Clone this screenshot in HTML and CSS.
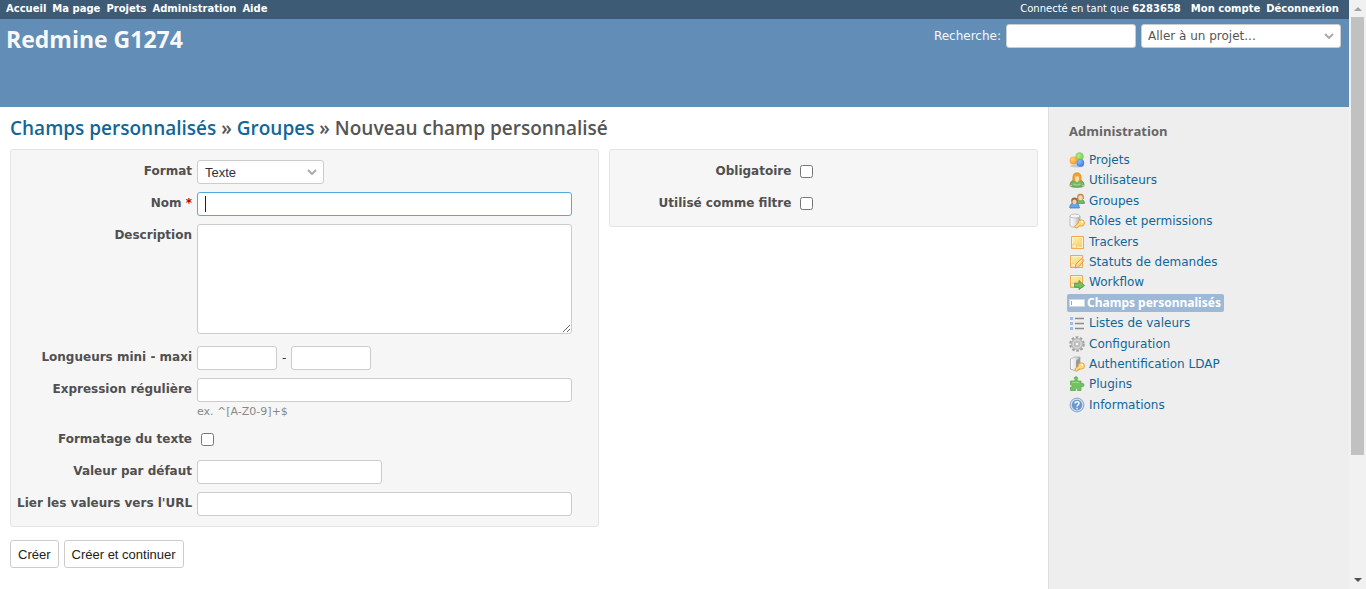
FILE: index.html
```
<!DOCTYPE html>
<html lang="fr">
<head>
<meta charset="utf-8">
<title>Nouveau champ personnalisé - Redmine G1274</title>
<link rel="stylesheet" href="styles.css">
</head>
<body>
<div class="window">
  <div class="page">
    <div class="top-menu">
      <nav class="menu">
        <a href="#">Accueil</a><a href="#">Ma page</a><a href="#">Projets</a><a href="#">Administration</a><a href="#">Aide</a>
      </nav>
      <nav class="menu account">
        <span class="logged-as">Connecté en tant que <a href="#">6283658</a></span>
        <a href="#">Mon compte</a><a href="#">Déconnexion</a>
      </nav>
    </div>
    <header class="header">
      <h1>Redmine G1274</h1>
      <form class="quick-search">
        <label for="q">Recherche:</label>
        <input class="control search" id="q" type="text">
        <select class="control jump" aria-label="Projet"><option>Aller à un projet...</option></select>
      </form>
    </header>
    <div class="main">
      <main class="content">
        <h2><a href="#">Champs personnalisés</a> » <a href="#">Groupes</a> » Nouveau champ personnalisé</h2>
        <form>
          <div class="columns">
            <section class="box">
              <div class="row"><label for="format">Format</label>
                <div class="field"><select class="control format" id="format"><option>Texte</option></select></div></div>
              <div class="row"><label for="name">Nom <span class="required">*</span></label>
                <div class="field"><input class="control wide active" id="name" type="text"></div></div>
              <div class="row"><label for="description">Description</label>
                <div class="field"><textarea class="control wide" id="description"></textarea></div></div>
              <div class="row"><label for="min">Longueurs mini - maxi</label>
                <div class="field range"><input class="control short" id="min" type="text"><span>-</span><input class="control short" type="text" aria-label="Longueur maxi"></div></div>
              <div class="row"><label for="regexp">Expression régulière</label>
                <div class="field"><input class="control wide" id="regexp" type="text"><em class="info">ex. ^[A-Z0-9]+$</em></div></div>
              <div class="row"><label for="formatting">Formatage du texte</label>
                <div class="field"><input class="check" id="formatting" type="checkbox"></div></div>
              <div class="row"><label for="default">Valeur par défaut</label>
                <div class="field"><input class="control medium" id="default" type="text"></div></div>
              <div class="row"><label for="url">Lier les valeurs vers l'URL</label>
                <div class="field"><input class="control wide" id="url" type="text"></div></div>
            </section>
            <section class="box">
              <div class="row"><label for="mandatory">Obligatoire</label>
                <div class="field"><input class="check" id="mandatory" type="checkbox"></div></div>
              <div class="row"><label for="filter">Utilisé comme filtre</label>
                <div class="field"><input class="check" id="filter" type="checkbox"></div></div>
            </section>
          </div>
          <div class="actions">
            <button type="submit">Créer</button>
            <button type="submit">Créer et continuer</button>
          </div>
        </form>
      </main>
      <aside class="sidebar">
        <svg class="defs" width="0" height="0" aria-hidden="true"><defs>
          <radialGradient id="orange" cx=".4" cy=".35" r=".7"><stop offset="0" stop-color="#ffd27a"/><stop offset="1" stop-color="#f59423"/></radialGradient>
          <radialGradient id="green" cx=".4" cy=".4" r=".7"><stop offset="0" stop-color="#b7ef8c"/><stop offset="1" stop-color="#6cc644"/></radialGradient>
          <radialGradient id="blue" cx=".4" cy=".35" r=".7"><stop offset="0" stop-color="#8dbbff"/><stop offset="1" stop-color="#2f78e0"/></radialGradient>
          <linearGradient id="note" x2="1" y2="1"><stop offset="0" stop-color="#fff0b4"/><stop offset="1" stop-color="#fccb5e"/></linearGradient>
          <linearGradient id="metal"><stop offset="0" stop-color="#fdfdfd"/><stop offset=".5" stop-color="#e4e4e4"/><stop offset="1" stop-color="#aaa"/></linearGradient>
          <g id="key"><path d="m6.500 14.500 5-4.500" fill="none" stroke="#e2a03c" stroke-width="3.600"/><circle cx="12.300" cy="10" r="3.200" fill="#ffdb7c" stroke="#e2a03c" stroke-width=".9"/><path d="m7 14 5-4.500" stroke="#ffdb7c" stroke-width="2"/><circle cx="13.300" cy="9" r=".9" fill="#fff"/></g>
          <g id="sheet"><path d="M2.500 2.500h12v12h-12z" fill="url(#note)" stroke="#efa750"/><path d="M3.500 13.500v-10h10v10z" fill="none" stroke="#fff3c9"/><path d="M4 10c2.500 0 3.500 1 3.500 4H4z" fill="#fffae0" stroke="#f0b860" stroke-width=".7"/></g>
        </defs></svg>
        <h3>Administration</h3>
        <ul class="admin-menu">
          <li><a href="#"><svg viewBox="0 0 16 16"><ellipse cx="8" cy="14" rx="7" ry="1.500" fill="#c8c8c8"/><circle cx="10.500" cy="4.500" r="3.900" fill="url(#green)" stroke="#8bcd61" stroke-width=".5"/><circle cx="4.500" cy="8.500" r="3.900" fill="url(#orange)"/><circle cx="11.300" cy="10.800" r="3.900" fill="url(#blue)"/></svg>Projets</a></li>
          <li><a href="#"><svg viewBox="0 0 16 16"><path d="M1 14.300C1 10 2.500 8.500 5 8.500h6c2.500 0 4 1.500 4 5.800-3 1.300-11 1.300-14 0z" fill="#74b765" stroke="#4c9148" stroke-width=".8"/><path d="M3.800 8.500C3.500 3 4.500.8 8 .8s4.500 2.200 4.200 7.700l-2 1H5.800z" fill="#f0a02c" stroke="#cf8420" stroke-width=".5"/><path d="M6 4.500h4v3q-.5 2.500-2 2.500T6 7.500z" fill="#ffdfae"/><path d="M4.500 12q3.500 2 7 0" fill="none" stroke="#9ad08a" stroke-width="1.500"/><circle cx="1.700" cy="13.700" r="1" fill="#f5c491"/><circle cx="14.300" cy="13.700" r="1" fill="#f5c491"/></svg>Utilisateurs</a></li>
          <li><a href="#"><svg viewBox="0 0 16 16"><path d="M7 10.500C7 7.500 9 6 11 6s4.500 1 4.500 4.500z" fill="#77b568" stroke="#4f944c" stroke-width=".7"/><path d="M8 6C8 2 9 .8 11.500.8S15 2 15 6z" fill="#c68d48"/><ellipse cx="11.500" cy="4.800" rx="2.200" ry="2.500" fill="#ffd9aa"/><path d="M.8 15c0-4 2-5 4.700-5s4.800 1 4.800 5z" fill="#68a4e8" stroke="#3974bd" stroke-width=".7"/><circle cx="5.500" cy="7.700" r="3.300" fill="#9c6845"/><ellipse cx="5.500" cy="8.900" rx="2.200" ry="2.400" fill="#ffcda3"/></svg>Groupes</a></li>
          <li><a href="#"><svg viewBox="0 0 16 16"><path d="M1 3v9c0 3 10 3 10 0V3z" fill="url(#metal)" stroke="#aaa" stroke-width=".8"/><ellipse cx="6" cy="3" rx="5" ry="2" fill="#f5f5f5" stroke="#b4b4b4" stroke-width=".8"/><use href="#key"/></svg>Rôles et permissions</a></li>
          <li><a href="#"><svg viewBox="0 0 16 16"><use href="#sheet"/></svg>Trackers</a></li>
          <li><a href="#"><svg viewBox="0 0 16 16"><use href="#sheet" x="-1" y="-1"/><path d="m6 14 1-4 5.500-5.500 2.500 2.300L9.500 13z" fill="#fad47c" stroke="#c99550" stroke-width=".8"/><path d="m11.500 5.500 1.500-1.700 2.500 2-1.500 2z" fill="#eeb3a4"/><path d="m8 11 5-5" stroke="#fff0b0"/></svg>Statuts de demandes</a></li>
          <li><a href="#"><svg viewBox="0 0 16 16"><use href="#sheet" x="-1" y="-1"/><path d="M5.500 9.200H10V6.500l5.500 5-5.500 4v-2.300H5.500z" fill="#79c05e" stroke="#43903c" stroke-width=".8"/></svg>Workflow</a></li>
          <li><a class="selected" href="#"><svg viewBox="0 0 16 16"><path d="M.5 4.500h15v7H.5z" fill="#fff" stroke="#d4d8dc"/><path d="M2.500 6v4" stroke="#aaa"/></svg>Champs personnalisés</a></li>
          <li><a href="#"><svg viewBox="0 0 16 16"><path d="M1 2h3v3H1zm0 5h3v3H1zm0 5h3v3H1z" fill="#9dbcf5"/><path d="M6 3.500h9m-9 5h9m-9 5h9" stroke="#8c8c8c" stroke-width="1.500"/></svg>Listes de valeurs</a></li>
          <li><a href="#"><svg viewBox="0 0 16 16"><circle cx="8" cy="8" r="6.500" fill="none" stroke="#a2a2a2" stroke-width="2.600" stroke-dasharray="2.500 1.584"/><circle cx="8" cy="8" r="4.200" fill="none" stroke="#b8b8b8" stroke-width="3.600"/><circle cx="8" cy="8" r="4" fill="none" stroke="#d8d8d8" stroke-width="1.500"/><circle cx="8" cy="8" r="2" fill="#f4f4f4" stroke="#999" stroke-width=".7"/></svg>Configuration</a></li>
          <li><a href="#"><svg viewBox="0 0 16 16"><path d="m1.500 3 4-2H11v12l-4 2-5.500-2z" fill="url(#metal)" stroke="#aaa" stroke-width=".8"/><path d="m2 3 5 1.500V14" fill="none" stroke="#eee"/><path d="M7 4.500 11 2v11l-4 2z" fill="#999"/><use href="#key"/></svg>Authentification LDAP</a></li>
          <li><a href="#"><svg viewBox="0 0 16 16"><path d="M1.500 5H6V3.500C4.500 2 5.500.8 7 .8s2.500 1.200 1.200 2.700V5H12v3c1.500-1.500 3-.5 3 1s-1.500 2.500-3 1v4.500H8.500v-1c1-1.700-3-1.700-2 0v1h-5V11c2 1.200 2.500-3 0-2z" fill="#72c264" stroke="#5aab51" stroke-width=".8"/><path d="M3 6.500h7.500" stroke="#9cda8e"/></svg>Plugins</a></li>
          <li><a href="#"><svg viewBox="0 0 16 16"><circle cx="8" cy="8" r="6.900" fill="#d0dff2" stroke="#86a5cd"/><circle cx="8" cy="8" r="5.200" fill="#6b97cf"/><path d="M6 6.500C6 4 10.300 4 10 6.500 9.800 8 8 8 8 9.500M8 10.800v1.400" fill="none" stroke="#fff" stroke-width="1.500"/></svg>Informations</a></li>
        </ul>
      </aside>
    </div>
  </div>
  <div class="scrollbar" aria-hidden="true">
    <svg class="arrow" viewBox="0 0 17 17"><path d="m5 11 4-4 4 4z" fill="#a3a3a3"/></svg>
    <div class="track"><div class="thumb"></div></div>
    <svg class="arrow" viewBox="0 0 17 17"><path d="m5 6 4 4 4-4z" fill="#505050"/></svg>
  </div>
</div>
</body>
</html>
```
FILE: styles.css
```
* { box-sizing: border-box; }
body { margin: 0; font-family: Verdana, "DejaVu Sans", sans-serif; font-size: 12px; color: #333; background: #fff; }
a { color: #169; text-decoration: none; }
h1, h2, h3 { margin: 0; font-family: "Trebuchet MS", "Open Sans", sans-serif; }
.window { display: flex; min-height: 100vh; }
.page { flex: 1; min-width: 0; display: flex; flex-direction: column; }

.top-menu { display: flex; justify-content: space-between; height: 19px; padding: 0 10px 0 6px; line-height: 17px; background: #3e5b76; color: #fff; font-size: 10px; }
.menu { display: flex; gap: 6px; }
.menu a { color: #fff; font-weight: bold; }
.logged-as { margin-right: 4px; }

.header { display: flex; justify-content: space-between; align-items: flex-start; height: 88px; padding: 5px 8px 0 6px; background: #628db6; color: #f8f8f8; }
.header h1 { font-size: 23px; line-height: 30px; font-weight: 700; }
.quick-search { display: flex; align-items: center; gap: 5px; }
.search { width: 130px; }
.jump { width: 200px; }

.control { height: 24px; margin: 0; padding: 0 7px; border: 1px solid #ccc; border-radius: 3px; background-color: #fff; font-family: Arial, "Liberation Sans", sans-serif; font-size: 13px; color: #333; }
select.control { appearance: none; background-image: url("data:image/svg+xml,%3Csvg xmlns='http://www.w3.org/2000/svg' width='10' height='6'%3E%3Cpath d='M1 1l4 4 4-4' fill='none' stroke='%23aaa' stroke-width='2'/%3E%3C/svg%3E"); background-repeat: no-repeat; background-position: right 6px center; }
.jump.control { padding: 0 6px; font-family: Verdana, "DejaVu Sans", sans-serif; font-size: 12px; color: #555; }

.main { flex: 1; display: flex; }
.content { flex: 1; min-width: 0; padding: 8px 10px 20px; }
.content h2 { margin-bottom: 8px; font-size: 19px; line-height: 26px; font-weight: 600; color: #555; }
.columns { display: grid; grid-template-columns: 11fr 8fr; gap: 10px; align-items: start; }
.box { display: grid; gap: 8px; padding: 10px 26px 10px 6px; border: 1px solid #e4e4e4; border-radius: 3px; background: #f6f6f6; }
.row { display: grid; grid-template-columns: 175px 1fr; gap: 5px; }
.row > label { text-align: right; font-weight: bold; line-height: 22px; color: #505050; white-space: nowrap; }
.required { color: #b00; }
.field { min-width: 0; min-height: 24px; }
.field .control { display: block; }
.field .wide { width: 100%; }
.field .medium { width: 185px; }
.field .short { width: 80px; }
.format { width: 127px; }
.active.control { border-color: #5ad; background-image: linear-gradient(#222, #222); background-size: 1px 16px; background-repeat: no-repeat; background-position: 7px 3px; }
textarea.control { height: 110px; margin-bottom: 4px; resize: vertical; }
.field.range { display: flex; align-items: center; gap: 5px; }
.info { display: block; padding-top: 2px; font-style: normal; font-size: 11px; line-height: 16px; color: #888; }
.check { display: block; width: 13px; height: 13px; margin: 5px 4px; }
.actions { display: flex; gap: 5px; padding-top: 13px; }
.actions button { height: 28px; padding: 0 7px; border: 1px solid #ccc; border-radius: 3px; background: #fff; font-family: Arial, "Liberation Sans", sans-serif; font-size: 13px; color: #222; }

.sidebar { width: 301px; padding: 14px 20px; border-left: 1px solid #ddd; background: #eee; }
.defs { position: absolute; }
.sidebar h3 { font-size: 13px; line-height: 20px; color: #666; }
.admin-menu { display: grid; align-content: space-between; min-height: 265px; margin: 9px 0 0; padding: 0; list-style: none; }
.admin-menu a { display: inline-flex; align-items: center; gap: 4px; height: 20px; }
.admin-menu svg { width: 16px; height: 16px; }
.admin-menu .selected { gap: 2px; height: 18px; margin: 1px 0 1px -2px; padding: 0 3px 0 2px; border-radius: 2px; background: #9db9d5; color: #fff; font-family: "Noto Sans", sans-serif; font-weight: bold; }
.admin-menu li { height: 20px; line-height: 20px; display: flex; }

.scrollbar { display: flex; flex-direction: column; width: 17px; background: #f1f1f1; }
.arrow { width: 17px; height: 17px; }
.track { flex: 1; padding: 0 2px; }
.thumb { height: 79%; background: #c1c1c1; }
```
